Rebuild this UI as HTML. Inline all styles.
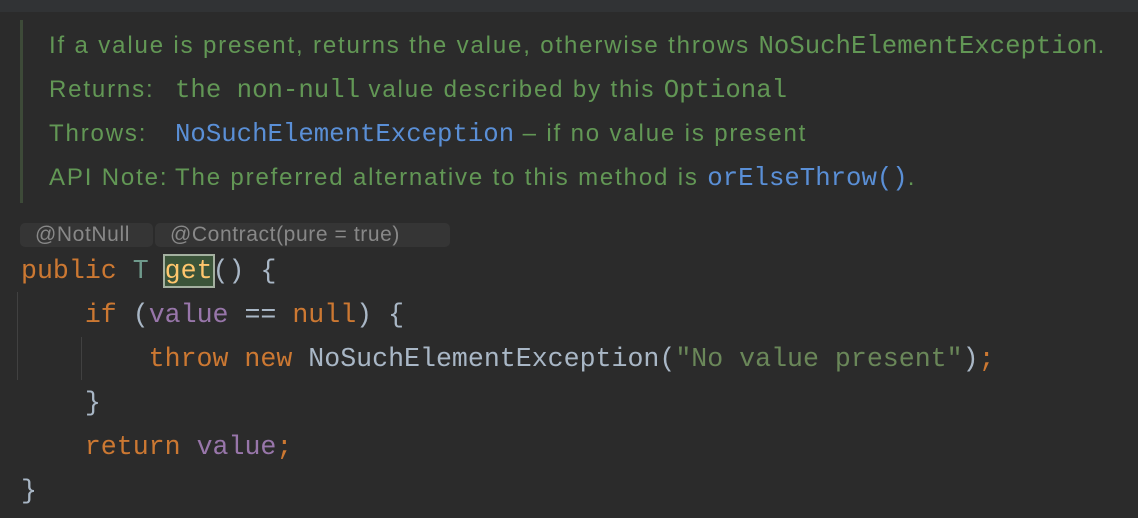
<!DOCTYPE html>
<html><head><style>
body{margin:0;width:1138px;height:518px;background:#2b2b2b;overflow:hidden;position:relative;font-family:"Liberation Sans",sans-serif}
.top{position:absolute;left:0;top:0;width:1138px;height:12px;background:#313335}
.bar{position:absolute;left:20px;top:20px;width:3px;height:183px;background:#3d4a38}
.doc{position:absolute;left:49px;color:#629755;font-size:24px;letter-spacing:1.85px;white-space:nowrap;line-height:30px}
.m{font-family:"Liberation Mono",monospace;font-size:25.7px;letter-spacing:0}
.b{color:#5a8fd6}
.lab{display:inline-block;width:126px}
.code{position:absolute;left:21px;font-family:"Liberation Mono",monospace;font-size:26.6px;color:#a9b7c6;white-space:pre;line-height:44px}
.k{color:#cc7832}.t{color:#6f9a8c}.p{color:#9876aa}.s{color:#6a8759}
.g{background:#3b5439;outline:2px solid #a4b0a0;color:#ffc66d}
.hint{position:absolute;top:223px;height:24px;background:#353535;color:#888;font-size:21px;letter-spacing:0.6px;line-height:24px;border-radius:5px;padding:0 0 0 15px;box-sizing:border-box}
.guide{position:absolute;width:1px;background:#414141}
</style></head><body>
<div class="top"></div>
<div class="bar"></div>
<div class="doc" style="top:31px">If a value is present, returns the value, otherwise throws <span class="m">NoSuchElementException</span>.</div>
<div class="doc" style="top:75px"><span class="lab">Returns:</span><span class="m">the non-null</span> value described by this <span class="m">Optional</span></div>
<div class="doc" style="top:119px"><span class="lab">Throws:</span><span class="m b">NoSuchElementException</span> – if no value is present</div>
<div class="doc" style="top:163px"><span class="lab">API Note:</span>The preferred alternative to this method is <span class="m b">orElseThrow()</span>.</div>
<div class="hint" style="left:20px;width:133px">@NotNull</div>
<div class="hint" style="left:155px;width:295px">@Contract(pure = true)</div>
<div class="guide" style="left:17px;top:292px;height:88px"></div>
<div class="guide" style="left:81px;top:337px;height:43px"></div>
<div class="code" style="top:249px"><span class="k">public</span> <span class="t">T</span> <span class="g">get</span>() {</div>
<div class="code" style="top:293px">    <span class="k">if</span> (<span class="p">value</span> == <span class="k">null</span>) {</div>
<div class="code" style="top:337px">        <span class="k">throw new</span> NoSuchElementException(<span class="s">"No value present"</span>)<span class="k">;</span></div>
<div class="code" style="top:381px">    }</div>
<div class="code" style="top:425px">    <span class="k">return</span> <span class="p">value</span><span class="k">;</span></div>
<div class="code" style="top:469px">}</div>
</body></html>
